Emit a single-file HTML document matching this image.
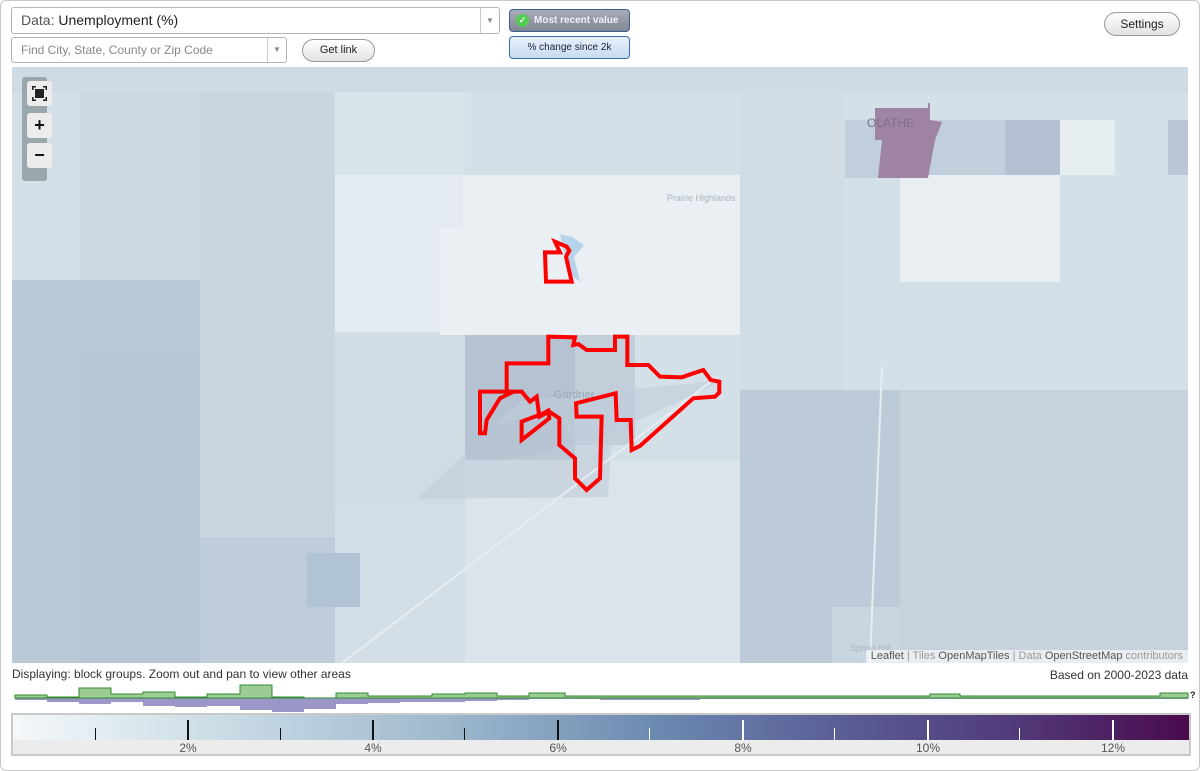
<!DOCTYPE html>
<html><head><meta charset="utf-8"><style>
*{box-sizing:border-box;margin:0;padding:0}
body{width:1200px;height:771px;background:#fff;font-family:"Liberation Sans",Arial,sans-serif;position:relative;overflow:hidden}
.frame{position:absolute;left:0;top:0;width:1200px;height:771px;border:1px solid #c8c8c8;border-radius:6px}
.sel{position:absolute;background:#fff;border:1px solid #b5b5b5;border-radius:3px;color:#555}
.arr{position:absolute;top:0;right:0;bottom:0;width:19px;border-left:1px solid #ccc;color:#888;font-size:8px;text-align:center}
.btn{position:absolute;border:1px solid #999;border-radius:13px;background:linear-gradient(#fff,#e2e2e2);font-size:11px;color:#222;text-align:center}
.map{position:absolute;left:12px;top:67px;width:1176px;height:596px;background:#d4e0e8;overflow:hidden}
.b{position:absolute}
.ctl{position:absolute;left:10px;top:10px;width:25px;height:104px;background:#9aa7ad;border-radius:3px}
.ctl div{position:absolute;left:5px;width:25px;height:25px;background:#ececec;border-radius:3px;font-weight:bold;text-align:center;line-height:24px;font-size:18px;color:#111}
</style></head><body>
<div class="frame"></div>
<div class="sel" style="left:11px;top:7px;width:489px;height:27px;font-size:14px;line-height:25px;padding-left:9px">Data: <span style="color:#222">Unemployment (%)</span><div class="arr" style="line-height:25px">▼</div></div>
<div class="sel" style="left:11px;top:37px;width:276px;height:26px;font-size:12px;line-height:24px;padding-left:9px;color:#888">Find City, State, County or Zip Code<div class="arr" style="line-height:24px">▼</div></div>
<div class="btn" style="left:302px;top:39px;width:73px;height:23px;line-height:21px">Get link</div>
<div style="position:absolute;left:509px;top:9px;width:121px;height:23px;border:1px solid #3b5f8a;border-radius:4px;background:linear-gradient(#a6adb8,#7f8794);color:#eef;font-size:10px;font-weight:bold;line-height:21px;padding-left:24px">Most recent value<span style="position:absolute;left:6px;top:4px;width:13px;height:13px;border-radius:7px;background:#5c5;color:#fff;font-size:9px;line-height:13px;text-align:center">✓</span></div>
<div style="position:absolute;left:509px;top:36px;width:121px;height:23px;border:1px solid #3b6fa8;border-radius:4px;background:linear-gradient(#e8f1fa,#c7dbef);color:#223;font-size:10px;line-height:21px;text-align:center">% change since 2k</div>
<div class="btn" style="left:1104px;top:12px;width:76px;height:24px;line-height:22px;font-size:12px">Settings</div>

<div class="map">
 <div class="b" style="left:0;top:0;width:1176px;height:25px;background:#cfdbe4"></div>
 <div class="b" style="left:68px;top:25px;width:120px;height:260px;background:#cbd8e1"></div>
 <div class="b" style="left:0;top:213px;width:188px;height:383px;background:#bac9d6"></div>
 <div class="b" style="left:68px;top:285px;width:120px;height:311px;background:#b7c6d4"></div>
 <div class="b" style="left:188px;top:25px;width:135px;height:571px;background:#c9d6e0"></div>
 <div class="b" style="left:188px;top:470px;width:135px;height:126px;background:#bfccd9"></div>
 <div class="b" style="left:323px;top:25px;width:130px;height:240px;background:#d9e3ea"></div>
 <div class="b" style="left:323px;top:108px;width:130px;height:157px;background:#e3eaf0"></div>
 <div class="b" style="left:451px;top:108px;width:277px;height:160px;background:#e9eff3"></div>
 <div class="b" style="left:428px;top:161px;width:40px;height:107px;background:#e9eff3"></div>
 <div class="b" style="left:323px;top:268px;width:132px;height:170px;background:#d0dbe4"></div>
 <div class="b" style="left:453px;top:268px;width:110px;height:125px;background:#b4c2d2"></div>
 <div class="b" style="left:563px;top:268px;width:60px;height:110px;background:#c2cfdb"></div>
 <div class="b" style="left:453px;top:393px;width:275px;height:203px;background:#dbe4eb"></div>
 <div class="b" style="left:323px;top:438px;width:130px;height:158px;background:#d3dee7"></div>
 <div class="b" style="left:295px;top:486px;width:53px;height:54px;background:#b1c4d6"></div>
 <div class="b" style="left:728px;top:25px;width:105px;height:298px;background:#d1dce5"></div>
 <div class="b" style="left:728px;top:323px;width:170px;height:273px;background:#bdcbd8"></div>
 <div class="b" style="left:888px;top:323px;width:288px;height:273px;background:#c6d3de"></div>
 <div class="b" style="left:833px;top:53px;width:160px;height:58px;background:#c1cedb"></div>
 <div class="b" style="left:993px;top:53px;width:55px;height:55px;background:#b4c0d2"></div>
 <div class="b" style="left:888px;top:108px;width:160px;height:107px;background:#e8eef2"></div>
 <div class="b" style="left:1048px;top:53px;width:55px;height:55px;background:#e6edf1"></div>
 <div class="b" style="left:1156px;top:53px;width:20px;height:55px;background:#bac6d6"></div>
 <div class="b" style="left:820px;top:540px;width:68px;height:56px;background:#c9d5df"></div>
 <svg class="b" style="left:0;top:0" width="1176" height="596">
  <polygon points="863,41 916,41 916,36 918,36 918,53 930,55 923,73 916,111 866,111 870,73 863,73" fill="#9c7f9f" opacity="0.95"/>
  <polygon points="405,432 510,333 713,313 600,365 596,430" fill="#c0ccd9" opacity="0.6"/>
  <polygon points="455,365 545,343 560,375 520,390 455,393" fill="#b4c2d2" opacity="0.7"/>
  <polygon points="548,167 560,170 572,178 562,190 568,215 556,205 552,185" fill="#b7d3ea"/>
  <line x1="330" y1="596" x2="705" y2="310" stroke="#e6edf2" stroke-width="2"/>
  <line x1="858" y1="596" x2="870" y2="300" stroke="#e6edf2" stroke-width="2"/>
  <text x="855" y="60" font-size="12" fill="#7f6f89" font-family="Liberation Sans">OLATHE</text>
  <text x="655" y="134" font-size="9" fill="#aab6c2" font-family="Liberation Sans">Prairie Highlands</text>
  <text x="542" y="331" font-size="11" fill="#9aa7b6" font-family="Liberation Sans">Gardner</text>
  <text x="838" y="584" font-size="9" fill="#aab6c2" font-family="Liberation Sans">Spring Hill</text>
 </svg>
 <svg class="b" style="left:0;top:0" width="1176" height="596"><g transform="translate(448,153) scale(0.3333)" fill="none" stroke="#f00" stroke-width="12" stroke-linejoin="miter">
  <polygon points="265,350 345,352 340,375 355,372 380,390 465,390 465,350 502,350 502,435 565,435 600,470 665,472 730,450 752,480 778,485 778,518 765,530 700,535 540,678 515,690 512,600 470,600 467,520 348,550 350,590 425,590 420,775 380,810 345,775 345,715 298,675 298,595 268,575 238,590 230,530 210,545 185,515 140,515 140,430 265,430"/>
  <polygon points="60,515 160,515 120,535 80,600 75,640 60,640"/>
  <polygon points="185,605 250,580 265,572 268,595 185,660"/>
  <polygon points="255,97 300,97 285,65 320,80 328,92 318,110 335,185 258,185"/>
 </g></svg>
 <div class="ctl"><div style="top:4px"><svg width="25" height="25" viewBox="0 0 25 25"><rect x="8" y="8" width="9" height="9" fill="#222"/><path d="M5 5h4v1.5H6.5V9H5zM20 5h-4v1.5h2.5V9H20zM5 20h4v-1.5H6.5V16H5zM20 20h-4v-1.5h2.5V16H20z" fill="#222"/></svg></div><div style="top:36px">+</div><div style="top:66px">−</div></div>
 <div class="b" style="right:0;bottom:0;height:13px;padding:0 5px;background:rgba(255,255,255,0.6);font-size:11px;color:#999;line-height:13px"><span style="color:#555">Leaflet</span> | Tiles <span style="color:#555">OpenMapTiles</span> | Data <span style="color:#555">OpenStreetMap</span> contributors</div>
</div>

<div style="position:absolute;left:12px;top:667px;font-size:12px;color:#333">Displaying: block groups. Zoom out and pan to view other areas</div>
<div style="position:absolute;right:12px;top:668px;font-size:12px;color:#333">Based on 2000-2023 data</div>

<svg style="position:absolute;left:0;top:682px" width="1200" height="30">
 <polygon points="15,16 15,18 47,18 47,20 79,20 79,22 111,22 111,20 143,20 143,24 175,24 175,25 207,25 207,24 240,24 240,28 272,28 272,30 304,30 304,27 336,27 336,22 368,22 368,21 400,21 400,20 432,20 432,20 465,20 465,19 497,19 497,18 529,18 529,17 600,17 600,18 700,18 700,17 1188,17 1188,16" fill="#9b98c9"/>
 <polygon points="15,16 15,13 47,13 47,15 79,15 79,6 111,6 111,12 143,12 143,10 175,10 175,15 207,15 207,12 240,12 240,3 272,3 272,15 304,15 304,16 336,16 336,11 368,11 368,14 400,14 400,14 432,14 432,12 465,12 465,11 497,11 497,14 529,14 529,11 565,11 565,14 600,14 600,14 700,14 700,14 930,14 930,12 960,12 960,14 1160,14 1160,11 1188,11 1188,16" fill="#9dcb94" stroke="#2e8b2e" stroke-width="1"/>
 <text x="1190" y="16" font-size="9" font-weight="bold" fill="#222" font-family="Liberation Sans">?</text>
</svg>

<div style="position:absolute;left:11px;top:713px;width:1180px;height:43px;border:2px solid #c9c9c9;background:#ececec">
 <div style="position:absolute;left:0;top:0;width:1176px;height:25px;background:linear-gradient(90deg,#f4f8fa 0%,#c5d8e3 20%,#9bb6cb 38%,#6b89b0 55%,#5a5f96 70%,#513b7a 85%,#4a0a4d 100%)"></div>
 <div style="position:absolute;left:82px;top:13px;width:1px;height:12px;background:#111"></div>
 <div style="position:absolute;left:174px;top:5px;width:2px;height:20px;background:#111"></div>
 <div style="position:absolute;left:267px;top:13px;width:1px;height:12px;background:#111"></div>
 <div style="position:absolute;left:359px;top:5px;width:2px;height:20px;background:#111"></div>
 <div style="position:absolute;left:451px;top:13px;width:1px;height:12px;background:#111"></div>
 <div style="position:absolute;left:544px;top:5px;width:2px;height:20px;background:#111"></div>
 <div style="position:absolute;left:636px;top:13px;width:1px;height:12px;background:#fff"></div>
 <div style="position:absolute;left:729px;top:5px;width:2px;height:20px;background:#fff"></div>
 <div style="position:absolute;left:821px;top:13px;width:1px;height:12px;background:#fff"></div>
 <div style="position:absolute;left:914px;top:5px;width:2px;height:20px;background:#fff"></div>
 <div style="position:absolute;left:1006px;top:13px;width:1px;height:12px;background:#fff"></div>
 <div style="position:absolute;left:1099px;top:5px;width:2px;height:20px;background:#fff"></div>
 <div style="position:absolute;top:26px;left:160px;width:30px;text-align:center;font-size:12px;color:#555">2%</div>
 <div style="position:absolute;top:26px;left:345px;width:30px;text-align:center;font-size:12px;color:#555">4%</div>
 <div style="position:absolute;top:26px;left:530px;width:30px;text-align:center;font-size:12px;color:#555">6%</div>
 <div style="position:absolute;top:26px;left:715px;width:30px;text-align:center;font-size:12px;color:#555">8%</div>
 <div style="position:absolute;top:26px;left:898px;width:34px;text-align:center;font-size:12px;color:#555">10%</div>
 <div style="position:absolute;top:26px;left:1083px;width:34px;text-align:center;font-size:12px;color:#555">12%</div>
</div>
</body></html>
